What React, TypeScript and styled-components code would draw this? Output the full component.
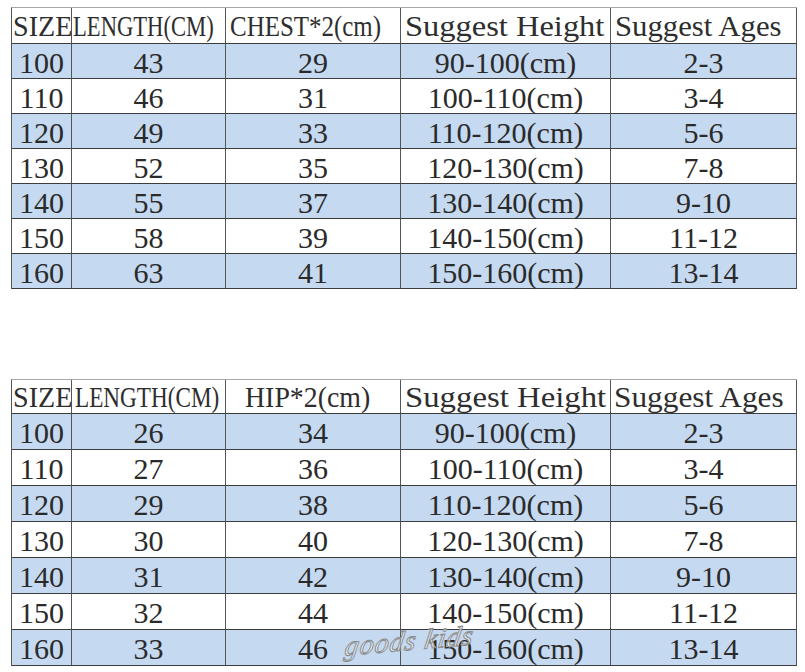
import React from "react";
import styled, { createGlobalStyle } from "styled-components";

const serif = `"Liberation Serif", "Times New Roman", serif`;

const Global = createGlobalStyle`
  html, body { margin: 0; padding: 0; background: #ffffff; }
  body { font-family: "Liberation Serif", "Times New Roman", serif; color: #1a1a1a; }
`;

const Page = styled.div`
  width: 805px;
  height: 672px;
  padding: 7px 0 0 11px;
  box-sizing: border-box;
  display: flex;
  flex-direction: column;
  gap: 90px;
  overflow: hidden;
  font-family: ${serif};
`;

const TableWrap = styled.div`
  position: relative;
  width: 786px;
`;

const Grid = styled.div`
  display: grid;
  grid-template-columns: 60px 154px 175px 210px 186px;
  border-left: 1px solid #555;
  border-top: 1px solid #a8a8a8;
`;

const HeadCell = styled.div<{ $h: number; $pad: number }>`
  height: ${(p) => p.$h}px;
  box-sizing: border-box;
  border-right: 1px solid #555;
  border-bottom: 1px solid #3c3c3c;
  background: #ffffff;
  display: flex;
  align-items: center;
  padding-left: ${(p) => p.$pad}px;
  padding-top: 2px;
  overflow: visible;
  white-space: nowrap;
`;

const HeadText = styled.span<{ $sx: number }>`
  display: inline-block;
  font-family: ${serif};
  font-weight: 400;
  font-size: 29px;
  line-height: 1;
  transform: scaleX(${(p) => p.$sx});
  transform-origin: left center;
  color: #2e2e2e;
`;

const Cell = styled.div<{ $h: number; $blue: boolean }>`
  height: ${(p) => p.$h}px;
  box-sizing: border-box;
  border-right: 1px solid #555;
  border-bottom: 1px solid #3c3c3c;
  background: ${(p) => (p.$blue ? "#c5d9f0" : "#ffffff")};
  display: flex;
  align-items: center;
  justify-content: center;
  padding-top: 3px;
  font-family: ${serif};
  font-weight: 400;
  font-size: 30px;
  line-height: 1;
  color: #2a2a2a;
  white-space: nowrap;
`;

const Watermark = styled.div`
  position: absolute;
  left: 334px;
  bottom: 9px;
  font-family: ${serif};
  font-style: italic;
  font-size: 28px;
  letter-spacing: 1px;
  color: rgba(255, 255, 255, 0.55);
  -webkit-text-stroke: 1px #8c8c8c;
  transform: rotate(-5deg) skewX(-14deg);
  pointer-events: none;
`;

type Head = { label: string; pad: number; sx: number };

const rowsTop = [
  ["100", "43", "29", "90-100(cm)", "2-3"],
  ["110", "46", "31", "100-110(cm)", "3-4"],
  ["120", "49", "33", "110-120(cm)", "5-6"],
  ["130", "52", "35", "120-130(cm)", "7-8"],
  ["140", "55", "37", "130-140(cm)", "9-10"],
  ["150", "58", "39", "140-150(cm)", "11-12"],
  ["160", "63", "41", "150-160(cm)", "13-14"],
];

const rowsBottom = [
  ["100", "26", "34", "90-100(cm)", "2-3"],
  ["110", "27", "36", "100-110(cm)", "3-4"],
  ["120", "29", "38", "110-120(cm)", "5-6"],
  ["130", "30", "40", "120-130(cm)", "7-8"],
  ["140", "31", "42", "130-140(cm)", "9-10"],
  ["150", "32", "44", "140-150(cm)", "11-12"],
  ["160", "33", "46", "150-160(cm)", "13-14"],
];

const headTop: Head[] = [
  { label: "SIZE", pad: 1, sx: 0.97 },
  { label: "LENGTH(CM)", pad: 1, sx: 0.78 },
  { label: "CHEST*2(cm)", pad: 4, sx: 0.86 },
  { label: "Suggest Height", pad: 4, sx: 1.12 },
  { label: "Suggest Ages", pad: 4, sx: 1.06 },
];

const headBottom: Head[] = [
  { label: "SIZE", pad: 1, sx: 0.97 },
  { label: "LENGTH(CM)", pad: 3, sx: 0.8 },
  { label: "HIP*2(cm)", pad: 19, sx: 0.96 },
  { label: "Suggest Height", pad: 4, sx: 1.13 },
  { label: "Suggest Ages", pad: 3, sx: 1.08 },
];

function SizeTable({
  heads,
  rows,
  headH,
  rowH,
  children,
}: {
  heads: Head[];
  rows: string[][];
  headH: number;
  rowH: number;
  children?: React.ReactNode;
}) {
  return (
    <TableWrap>
      <Grid>
        {heads.map((h) => (
          <HeadCell key={h.label} $h={headH} $pad={h.pad}>
            <HeadText $sx={h.sx}>{h.label}</HeadText>
          </HeadCell>
        ))}
        {rows.map((r, i) =>
          r.map((v, j) => (
            <Cell key={`${i}-${j}`} $h={rowH} $blue={i % 2 === 0}>
              {v}
            </Cell>
          ))
        )}
      </Grid>
      {children}
    </TableWrap>
  );
}

export default function App() {
  return (
    <>
      <Global />
      <Page>
        <SizeTable heads={headTop} rows={rowsTop} headH={36} rowH={35} />
        <SizeTable heads={headBottom} rows={rowsBottom} headH={34} rowH={36}>
          <Watermark>goods kids</Watermark>
        </SizeTable>
      </Page>
    </>
  );
}
